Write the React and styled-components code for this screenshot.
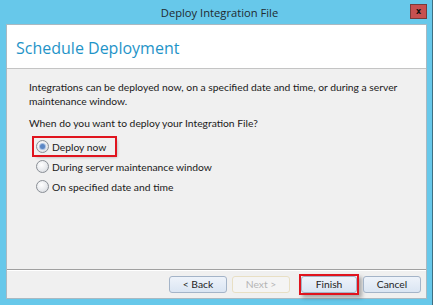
import React from "react";
import styled, { createGlobalStyle } from "styled-components";

const GlobalStyle = createGlobalStyle`
  html, body {
    margin: 0;
    padding: 0;
    background: #67c8ea;
  }
  body {
    font-family: "Open Sans", "Noto Sans", sans-serif;
  }
`;

const Window = styled.div`
  width: 433px;
  height: 305px;
  box-sizing: border-box;
  background: #67c8ea;
  border-right: 1px solid #3e6f82;
  padding: 0 5px 6px 6px;
  display: flex;
  flex-direction: column;
`;

const TitleBar = styled.div`
  height: 24px;
  display: grid;
  grid-template-columns: 1fr auto 1fr;
  align-items: center;
`;

const Title = styled.div`
  grid-column: 2;
  font-size: 11.2px;
  color: #1f2a30;
  padding-left: 6px;
`;

const CloseButton = styled.div`
  grid-column: 3;
  justify-self: end;
  width: 15px;
  height: 13px;
  margin-top: -1px;
  background: #c75050;
  border: 1px solid #7a3a3a;
  display: flex;
  align-items: center;
  justify-content: center;
  font-family: "DejaVu Sans", sans-serif;
  font-weight: bold;
  font-size: 8px;
  color: #111;
  line-height: 1;
`;

const Client = styled.div`
  flex: 1;
  display: flex;
  flex-direction: column;
  border: 1px solid #a9b9c2;
  background: #f0f0f0;
`;

const Header = styled.div`
  height: 44px;
  background: #fff;
  border-bottom: 1px solid #c4c4c4;
  display: flex;
  align-items: center;
  padding-left: 9px;
  padding-top: 2px;
  box-sizing: border-box;
`;

const HeaderTitle = styled.h1`
  margin: 0;
  font-size: 16px;
  font-weight: 400;
  color: #1f94c8;
`;

const Body = styled.div`
  flex: 1;
  padding: 11px 20px 0 22px;
  font-family: Lato, "Open Sans", sans-serif;
  font-size: 10.3px;
  color: #1a1a1a;
`;

const Paragraph = styled.p`
  margin: 0 0 8px 0;
  line-height: 14px;
`;

const Options = styled.div`
  display: flex;
  flex-direction: column;
  gap: 3px;
  margin-top: 1px;
  margin-left: 5px;
`;

const Option = styled.label`
  display: flex;
  align-items: center;
  gap: 3px;
  height: 17px;
  box-sizing: border-box;
  width: fit-content;
  padding: 0 9px 0 2px;
  outline: ${(p) => (p.$highlight ? "2px solid #e0141e" : "none")};
  box-shadow: ${(p) => (p.$highlight ? "2px 2px 3px rgba(0,0,0,0.3)" : "none")};
`;

const Radio = styled.span`
  width: 11px;
  height: 11px;
  border-radius: 50%;
  border: 1px solid #8a8f96;
  background: radial-gradient(circle at 40% 35%, #ffffff 0%, #e6e8eb 60%, #cfd3d8 100%);
  display: flex;
  align-items: center;
  justify-content: center;

  &::after {
    content: "";
    display: ${(p) => (p.$checked ? "block" : "none")};
    width: 5px;
    height: 5px;
    border-radius: 50%;
    background: #5b86c4;
    box-shadow: 0 0 0 1px #a9c1e3;
  }
`;

const Footer = styled.div`
  height: 28px;
  border-top: 1px solid #a0a0a0;
  box-shadow: inset 0 1px 0 #ffffff;
  display: flex;
  justify-content: flex-end;
  align-items: center;
  gap: 5px;
  padding-right: 5px;
`;

const HighlightFrame = styled.span`
  display: flex;
  border: 2px solid #e0141e;
  box-shadow: 3px 3px 4px rgba(0, 0, 0, 0.3);
  margin-left: 4px;
  margin-right: -1px;
`;

const Button = styled.button`
  width: ${(p) => (p.$narrow ? "56px" : "58px")};
  height: 17px;
  box-sizing: border-box;
  border-radius: 3px;
  font-family: Lato, "Open Sans", sans-serif;
  font-size: 10.3px;
  padding: 0;
  border: 1px solid ${(p) => (p.disabled ? "#e8dfc4" : "#a4b4c8")};
  background: ${(p) =>
    p.disabled ? "#f4f4f4" : "linear-gradient(#eef3fa, #dae5f3)"};
  color: ${(p) => (p.disabled ? "#b4b4b4" : "#1e1e1e")};
`;

export default function App() {
  return (
    <>
      <GlobalStyle />
      <Window>
        <TitleBar>
          <Title>Deploy Integration File</Title>
          <CloseButton>x</CloseButton>
        </TitleBar>
        <Client>
          <Header>
            <HeaderTitle>Schedule Deployment</HeaderTitle>
          </Header>
          <Body>
            <Paragraph>
              Integrations can be deployed now, on a specified date and time, or during a server
              maintenance window.
            </Paragraph>
            <Paragraph>When do you want to deploy your Integration File?</Paragraph>
            <Options>
              <Option $highlight>
                <Radio $checked />
                Deploy now
              </Option>
              <Option>
                <Radio />
                During server maintenance window
              </Option>
              <Option>
                <Radio />
                On specified date and time
              </Option>
            </Options>
          </Body>
          <Footer>
            <Button>&lt; Back</Button>
            <Button disabled>Next &gt;</Button>
            <HighlightFrame>
              <Button $narrow>Finish</Button>
            </HighlightFrame>
            <Button>Cancel</Button>
          </Footer>
        </Client>
      </Window>
    </>
  );
}
